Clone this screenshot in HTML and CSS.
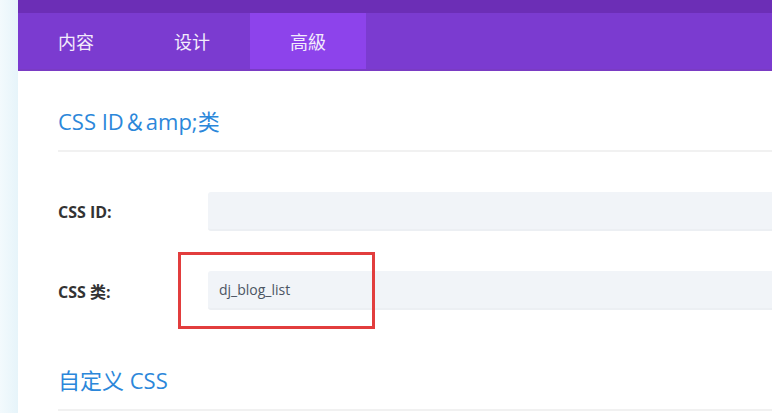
FILE: index.html
```html
<!DOCTYPE html>
<html lang="zh-CN">
<head>
  <meta charset="UTF-8">
  <title>高級 设置</title>
  <link rel="stylesheet" href="styles.css">
</head>
<body>
  <div class="side-strip"></div>

  <div id="settings-panel">
    <div class="top-bar"></div>

    <div class="tab-bar">
      <div class="tab">内容</div>
      <div class="tab">设计</div>
      <div class="tab active">高級</div>
    </div>

    <div class="section">
      <h3 class="section-title">CSS ID＆amp;类</h3>

      <div class="field-row">
        <label class="field-label">CSS ID:</label>
        <div class="field-input"></div>
      </div>

      <div class="field-row">
        <label class="field-label">CSS 类:</label>
        <div class="field-input">dj_blog_list</div>
        <div class="highlight-box"></div>
      </div>
    </div>

    <div class="section">
      <h3 class="section-title">自定义 CSS</h3>
    </div>
  </div>
</body>
</html>
```

FILE: styles.css
```css
* {
  margin: 0;
  padding: 0;
  box-sizing: border-box;
}

body {
  display: flex;
  height: 100vh;
  overflow: hidden;
  background: #fff;
  font-family: 'Open Sans', 'Noto Sans CJK SC', sans-serif;
}

.side-strip {
  width: 18px;
  flex-shrink: 0;
  background: linear-gradient(to right, #f3fafd, #e6f4fa);
}

#settings-panel {
  flex-grow: 1;
  overflow: hidden;
  background: #fff;
}

.top-bar {
  height: 13px;
  background: #6c2eb6;
}

.tab-bar {
  display: flex;
  height: 58px;
  background: #7b3bd0;
  border-bottom: 2px solid #7a3bc4;
}

.tab {
  width: 116px;
  display: flex;
  align-items: center;
  justify-content: center;
  color: #f3ecfb;
  font-size: 18px;
  font-family: 'Noto Sans CJK SC', sans-serif;
}

.tab.active {
  background: #8d43eb;
}

.section {
  padding: 0 0 0 40px;
}

.section-title {
  font-size: 22px;
  font-weight: 400;
  color: #2b87da;
  padding: 34px 0 13px;
  line-height: 32px;
  border-bottom: 2px solid #f1f1f1;
}

.section-title + .field-row {
  margin-top: 40px;
}

.field-row {
  position: relative;
  display: flex;
  align-items: center;
  height: 39px;
  margin-bottom: 40px;
}

.field-row:last-child {
  margin-bottom: 20px;
}

.field-label {
  width: 150px;
  flex-shrink: 0;
  font-size: 16px;
  font-weight: 700;
  color: #333;
}

.field-input {
  flex-grow: 1;
  height: 39px;
  line-height: 37px;
  padding: 0 11px;
  background: #f1f4f8;
  border-radius: 3px 0 0 3px;
  border-bottom: 2px solid #eceff3;
  font-size: 14px;
  color: #4b5563;
}

.highlight-box {
  position: absolute;
  left: 120px;
  top: -19px;
  width: 197px;
  height: 77px;
  border: 3px solid #e23d3d;
}
```
